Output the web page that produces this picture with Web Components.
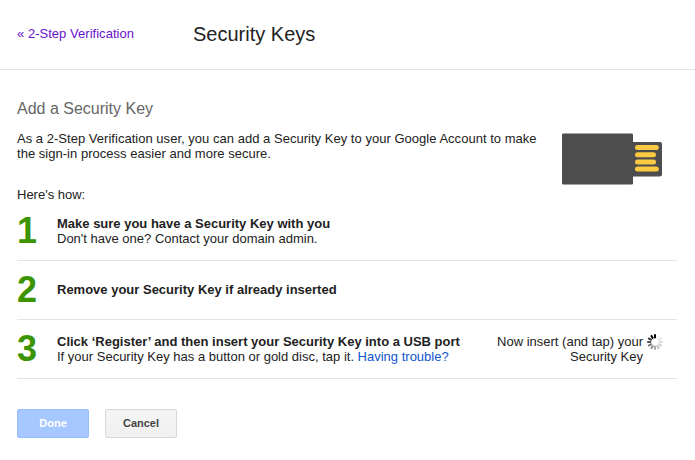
<!DOCTYPE html>
<html lang="en">
<head>
<meta charset="utf-8">
<title>Security Keys</title>
<style>
html,body{margin:0;background:#fff}
body{font:13px/15px "Liberation Sans",Arial,sans-serif;color:#222;width:695px;height:460px;overflow:hidden}
</style>
</head>
<body>
<security-page></security-page>
<script>
const define = (name, html, setup) => customElements.define(name, class extends HTMLElement {
  constructor() {
    super();
    const t = document.createElement('template');
    t.innerHTML = html;
    this.attachShadow({mode: 'open'}).append(t.content.cloneNode(true));
  }
  connectedCallback() { if (setup) setup(this.shadowRoot); }
});

define('page-header', `
<style>
:host{display:flex;box-sizing:border-box;height:70px;padding:0 17px;border-bottom:1px solid #e5e5e5}
a{width:176px;padding-top:26px;color:#61c;text-decoration:none;letter-spacing:.03px}
h1{margin:0;padding-top:22px;font-size:20px;line-height:24px;font-weight:400;color:#222}
</style>
<a><slot name="back"></slot></a><h1><slot></slot></h1>`);

define('usb-key', `
<style>:host{display:block;width:101px;height:52px}svg{display:block}</style>
<svg width="101" height="52" viewBox="0 0 101 52">
<rect x="0" y=".5" width="71" height="51" rx="1.2" fill="#4d4d4d"/>
<path d="M70 9H98Q100 9 100 11V41Q100 43.500 97.500 43.500H70Z" fill="#4d4d4d"/>
<g stroke="#fbc942" stroke-width="5" stroke-linecap="round"><path d="M75.500 14.500H94.300M75.500 21.700H91.500M75.500 28.900H91.500M75.500 36H94.300"/></g>
</svg>`);

define('busy-spinner', `
<style>:host{display:block;width:16px;height:16px}svg{display:block}</style>
<svg width="16" height="16" viewBox="-8 -8 16 16" stroke-width="2"></svg>`, root => {
  const svg = root.querySelector('svg');
  if (svg.childElementCount) return;
  const shades = ['#000', '#f0f0f0', '#e6e6e6', '#dcdcdc', '#d0d0d0', '#c0c0c0', '#aaa', '#909090', '#777', '#555', '#333', '#000'];
  shades.forEach((shade, i) => {
    const line = document.createElementNS('http://www.w3.org/2000/svg', 'line');
    const attrs = {x1: 0, y1: -3.8, x2: 0, y2: -7.8, stroke: shade, transform: 'rotate(' + i * 30 + ')'};
    for (const k in attrs) line.setAttribute(k, attrs[k]);
    svg.append(line);
  });
});

define('setup-step', `
<style>
:host{display:flex;box-sizing:border-box;height:59px;border-bottom:1px solid #e5e5e5;align-items:center}
.num{width:40px;font-size:36px;line-height:40px;font-weight:700;color:#3c9400}
.copy{flex:1;white-space:nowrap}
b{display:block}
:host([single]) .copy{padding-bottom:1px}
</style>
<div class="num"><slot name="number"></slot></div>
<div class="copy"><b><slot name="title"></slot></b><slot></slot></div>
<slot name="status"></slot>`);

define('step-status', `
<style>
:host{display:flex;gap:4px;padding-right:14px;text-align:right}
.text{width:160px}
</style>
<div class="text"><slot></slot></div><busy-spinner></busy-spinner>`);

define('push-button', `
<style>
:host{display:block}
button{display:block;box-sizing:border-box;width:72px;height:29px;padding:0;border:1px solid #d8d8d8;border-radius:2px;background:linear-gradient(#f5f5f5,#f0f0f0);color:#444;font:bold 11px/27px "Liberation Sans",Arial,sans-serif}
:host([primary]) button{background:#a6c7ff;border-color:#98befa;color:#fff}
</style>
<button><slot></slot></button>`);

define('security-page', `
<style>
:host{display:block}
main{padding:29px 18px 0 17px}
h2{margin:0;font-size:16px;line-height:20px;font-weight:400;color:#666}
.intro{display:flex;justify-content:space-between;height:56px;padding-top:12px;white-space:nowrap}
.intro p{margin:0;letter-spacing:.025px}
usb-key{margin:2px 14px 0 0}
.how{margin:0}
.actions{display:flex;gap:16px;padding-top:30px}
.help{color:#15c;text-decoration:none}
</style>
<page-header><span slot="back">« 2-Step Verification</span>Security Keys</page-header>
<main>
<h2>Add a Security Key</h2>
<div class="intro"><p>As a 2-Step Verification user, you can add a Security Key to your Google Account to make<br>the sign-in process easier and more secure.</p><usb-key></usb-key></div>
<p class="how">Here's how:</p>
<div class="steps">
<setup-step><span slot="number">1</span><span slot="title">Make sure you have a Security Key with you</span>Don't have one? Contact your domain admin.</setup-step>
<setup-step single><span slot="number">2</span><span slot="title">Remove your Security Key if already inserted</span></setup-step>
<setup-step><span slot="number">3</span><span slot="title">Click ‘Register’ and then insert your Security Key into a USB port</span>If your Security Key has a button or gold disc, tap it. <a class="help">Having trouble?</a><step-status slot="status">Now insert (and tap) your Security Key</step-status></setup-step>
</div>
<div class="actions"><push-button primary>Done</push-button><push-button>Cancel</push-button></div>
</main>`);
</script>
</body>
</html>
